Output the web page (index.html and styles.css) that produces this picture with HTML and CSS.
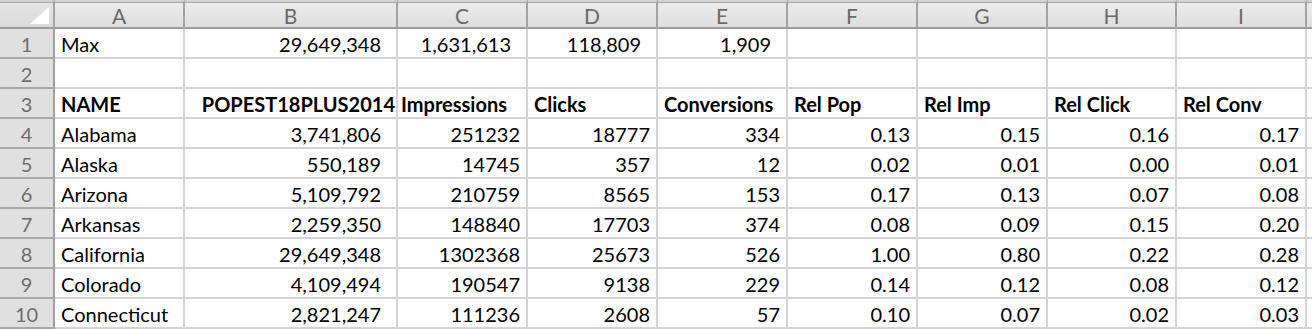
FILE: index.html
```html
<!DOCTYPE html>
<html>
<head>
<meta charset="utf-8">
<link rel="stylesheet" href="styles.css">
</head>
<body>
<div class="sheet">
  <div class="ch corner"><svg class="tri" width="22" height="20" viewBox="0 0 22 20"><defs><linearGradient id="tg" x1="0" y1="0" x2="1" y2="1"><stop offset="0" stop-color="#c8c8c8"/><stop offset="0.45" stop-color="#ffffff"/></linearGradient></defs><polygon points="1,18 20,18 20,1" fill="url(#tg)"/></svg></div>
  <div class="ch">A</div><div class="ch">B</div><div class="ch">C</div><div class="ch">D</div><div class="ch">E</div><div class="ch">F</div><div class="ch">G</div><div class="ch">H</div><div class="ch">I</div><div class="ch last"></div>

  <div class="rh">1</div><div class="c">Max</div><div class="c f">29,649,348</div><div class="c f">1,631,613</div><div class="c f">118,809</div><div class="c f">1,909</div><div class="c"></div><div class="c"></div><div class="c"></div><div class="c"></div><div class="c last"></div>

  <div class="rh">2</div><div class="c"></div><div class="c"></div><div class="c"></div><div class="c"></div><div class="c"></div><div class="c"></div><div class="c"></div><div class="c"></div><div class="c"></div><div class="c last"></div>

  <div class="rh">3</div><div class="c b">NAME</div><div class="c b wide">POPEST18PLUS2014</div><div class="c b tight">Impressions</div><div class="c b">Clicks</div><div class="c b">Conversions</div><div class="c b">Rel Pop</div><div class="c b">Rel Imp</div><div class="c b">Rel Click</div><div class="c b">Rel Conv</div><div class="c last"></div>

  <div class="rh">4</div><div class="c">Alabama</div><div class="c f">3,741,806</div><div class="c n">251232</div><div class="c n">18777</div><div class="c n">334</div><div class="c n">0.13</div><div class="c n">0.15</div><div class="c n">0.16</div><div class="c n">0.17</div><div class="c last"></div>

  <div class="rh">5</div><div class="c">Alaska</div><div class="c f">550,189</div><div class="c n">14745</div><div class="c n">357</div><div class="c n">12</div><div class="c n">0.02</div><div class="c n">0.01</div><div class="c n">0.00</div><div class="c n">0.01</div><div class="c last"></div>

  <div class="rh">6</div><div class="c">Arizona</div><div class="c f">5,109,792</div><div class="c n">210759</div><div class="c n">8565</div><div class="c n">153</div><div class="c n">0.17</div><div class="c n">0.13</div><div class="c n">0.07</div><div class="c n">0.08</div><div class="c last"></div>

  <div class="rh">7</div><div class="c">Arkansas</div><div class="c f">2,259,350</div><div class="c n">148840</div><div class="c n">17703</div><div class="c n">374</div><div class="c n">0.08</div><div class="c n">0.09</div><div class="c n">0.15</div><div class="c n">0.20</div><div class="c last"></div>

  <div class="rh">8</div><div class="c">California</div><div class="c f">29,649,348</div><div class="c n">1302368</div><div class="c n">25673</div><div class="c n">526</div><div class="c n">1.00</div><div class="c n">0.80</div><div class="c n">0.22</div><div class="c n">0.28</div><div class="c last"></div>

  <div class="rh">9</div><div class="c">Colorado</div><div class="c f">4,109,494</div><div class="c n">190547</div><div class="c n">9138</div><div class="c n">229</div><div class="c n">0.14</div><div class="c n">0.12</div><div class="c n">0.08</div><div class="c n">0.12</div><div class="c last"></div>

  <div class="rh">10</div><div class="c">Connecticut</div><div class="c f">2,821,247</div><div class="c n">111236</div><div class="c n">2608</div><div class="c n">57</div><div class="c n">0.10</div><div class="c n">0.07</div><div class="c n">0.02</div><div class="c n">0.03</div><div class="c last"></div>
</div>
</body>
</html>
```

FILE: styles.css
```css
html, body {
  margin: 0;
  padding: 0;
  background: #ffffff;
}

.sheet {
  display: grid;
  grid-template-columns: 55px 130px 213px 130px 130px 130px 130px 130px 129px 130px 1fr;
  grid-template-rows: 29px repeat(10, 30px);
  width: 1312px;
  font-family: Lato, "Liberation Sans", sans-serif;
  font-size: 20px;
  color: #000000;
  overflow: hidden;
}

.sheet > div {
  box-sizing: border-box;
  overflow: hidden;
  white-space: nowrap;
}

.ch {
  display: flex;
  align-items: center;
  justify-content: center;
  background: linear-gradient(#ececec, #dedede);
  border-top: 2px solid #d2d2d2;
  box-shadow: inset 0 1px 0 #a9a9a9;
  border-right: 2px solid #a3a3a3;
  border-bottom: 2px solid #9c9c9c;
  color: #6a6a6a;
  font-size: 21px;
  line-height: 1;
  padding-top: 1px;
}

.corner {
  position: relative;
  background: linear-gradient(#e6e6e6, #dadada);
}

.tri {
  position: absolute;
  right: 2px;
  bottom: 1px;
}

.rh {
  display: flex;
  align-items: flex-end;
  justify-content: center;
  background: #e0e0e0;
  border-right: 2px solid #a0a0a0;
  border-bottom: 2px solid #a8a8a8;
  color: #6e6e6e;
  line-height: 20px;
  padding-bottom: 3px;
}

.c {
  display: flex;
  align-items: flex-end;
  border-right: 2px solid #d4d4d4;
  border-bottom: 2px solid #d4d4d4;
  padding: 0 6px 3px 6px;
  line-height: 20px;
}

.c.last, .ch.last {
  border-right: none;
}

.n {
  justify-content: flex-end;
}

.f {
  justify-content: flex-end;
  padding-right: 15px;
}

.b {
  font-weight: 700;
}

.wide {
  justify-content: flex-end;
  padding-right: 1px;
  padding-left: 0;
}

.tight {
  padding-left: 3px;
}
```
